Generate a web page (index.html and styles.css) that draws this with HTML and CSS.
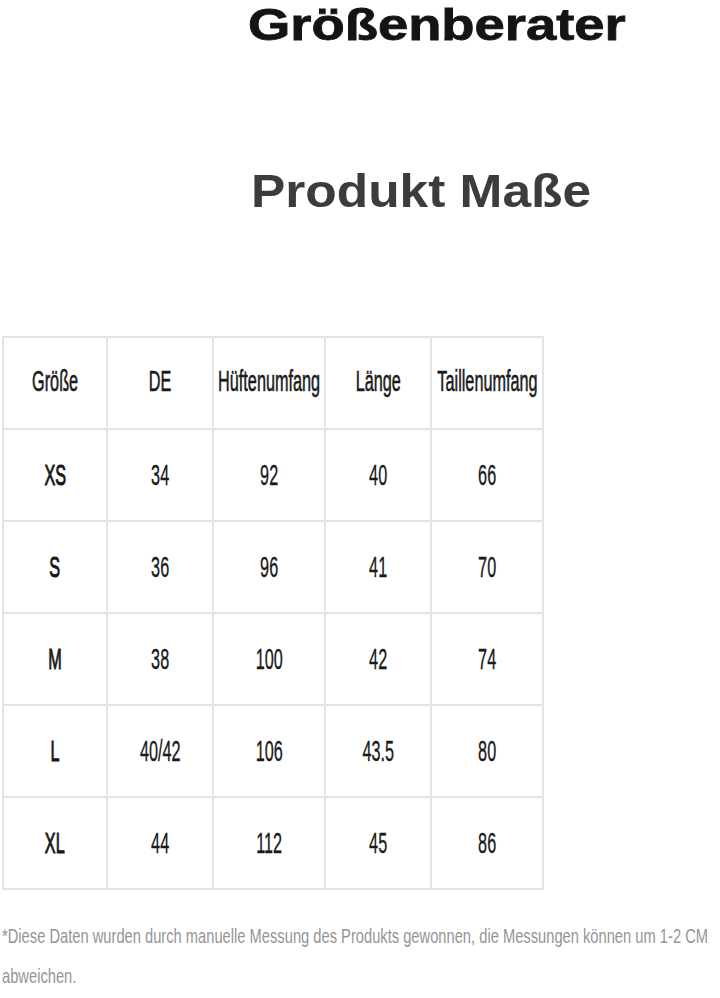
FILE: index.html
```html
<!DOCTYPE html>
<html lang="de">
<head>
<meta charset="utf-8">
<title>Größenberater</title>
<link rel="stylesheet" href="styles.css">
</head>
<body>
<div class="page">
  <h1 class="title"><span class="title-text">Größenberater</span></h1>
  <h2 class="subtitle"><span class="subtitle-text">Produkt Maße</span></h2>

  <div class="size-table" role="table">
    <div class="cell head" role="columnheader"><span class="t">Größe</span></div>
    <div class="cell head" role="columnheader"><span class="t">DE</span></div>
    <div class="cell head" role="columnheader"><span class="t">Hüftenumfang</span></div>
    <div class="cell head" role="columnheader"><span class="t">Länge</span></div>
    <div class="cell head" role="columnheader"><span class="t">Taillenumfang</span></div>

    <div class="cell size" role="cell"><span class="t">XS</span></div>
    <div class="cell" role="cell"><span class="t">34</span></div>
    <div class="cell" role="cell"><span class="t">92</span></div>
    <div class="cell" role="cell"><span class="t">40</span></div>
    <div class="cell" role="cell"><span class="t">66</span></div>

    <div class="cell size" role="cell"><span class="t">S</span></div>
    <div class="cell" role="cell"><span class="t">36</span></div>
    <div class="cell" role="cell"><span class="t">96</span></div>
    <div class="cell" role="cell"><span class="t">41</span></div>
    <div class="cell" role="cell"><span class="t">70</span></div>

    <div class="cell size" role="cell"><span class="t">M</span></div>
    <div class="cell" role="cell"><span class="t">38</span></div>
    <div class="cell" role="cell"><span class="t">100</span></div>
    <div class="cell" role="cell"><span class="t">42</span></div>
    <div class="cell" role="cell"><span class="t">74</span></div>

    <div class="cell size" role="cell"><span class="t">L</span></div>
    <div class="cell" role="cell"><span class="t">40/42</span></div>
    <div class="cell" role="cell"><span class="t">106</span></div>
    <div class="cell" role="cell"><span class="t">43.5</span></div>
    <div class="cell" role="cell"><span class="t">80</span></div>

    <div class="cell size" role="cell"><span class="t">XL</span></div>
    <div class="cell" role="cell"><span class="t">44</span></div>
    <div class="cell" role="cell"><span class="t">112</span></div>
    <div class="cell" role="cell"><span class="t">45</span></div>
    <div class="cell" role="cell"><span class="t">86</span></div>
  </div>

  <p class="note">
    <span class="note-line">*Diese Daten wurden durch manuelle Messung des Produkts gewonnen, die Messungen können um 1-2 CM</span>
    <span class="note-line">abweichen.</span>
  </p>
</div>
</body>
</html>
```

FILE: styles.css
```css
* {
  box-sizing: border-box;
}

html, body {
  margin: 0;
  padding: 0;
  background: #ffffff;
}

body {
  font-family: "Liberation Sans", Arial, sans-serif;
  width: 720px;
  height: 998px;
  overflow: hidden;
}

.page {
  display: flex;
  flex-direction: column;
}

.title {
  margin: 0;
  padding-left: 248px;
  font-size: 44px;
  line-height: 49px;
  font-weight: 700;
  color: #141414;
  white-space: nowrap;
}

.title-text {
  display: inline-block;
  transform: scaleX(1.236);
  transform-origin: left center;
  -webkit-text-stroke: 0.8px #141414;
}

.subtitle {
  margin: 119px 0 0 0;
  padding-left: 251px;
  font-size: 46px;
  line-height: 46px;
  font-weight: 700;
  color: #3c3c3c;
  white-space: nowrap;
}

.subtitle-text {
  display: inline-block;
  transform: scaleX(1.118);
  transform-origin: left center;
}

.size-table {
  margin: 122px 0 0 2px;
  display: grid;
  grid-template-columns: 104px 106px 112px 106px 112px;
  grid-auto-rows: 92px;
  width: 542px;
  border-top: 2px solid #e4e4e4;
  border-left: 2px solid #e4e4e4;
}

.cell {
  display: flex;
  align-items: center;
  justify-content: center;
  border-right: 2px solid #e4e4e4;
  border-bottom: 2px solid #e4e4e4;
  font-size: 29px;
  line-height: 1;
  color: #1a1a1a;
  white-space: nowrap;
}

.cell.head {
  padding-bottom: 3px;
}

.t {
  display: inline-block;
  transform: scaleX(0.56);
  transform-origin: center center;
  -webkit-text-stroke: 0.35px #1a1a1a;
}

.head .t {
  -webkit-text-stroke: 0.6px #1a1a1a;
}

.size .t {
  -webkit-text-stroke: 1px #161616;
}

.note {
  margin: 26px 0 0 2px;
  font-size: 21px;
  line-height: 40px;
  color: #959595;
  display: flex;
  flex-direction: column;
}

.note-line {
  display: block;
  white-space: nowrap;
  transform: scaleX(0.7);
  transform-origin: left center;
}
```
